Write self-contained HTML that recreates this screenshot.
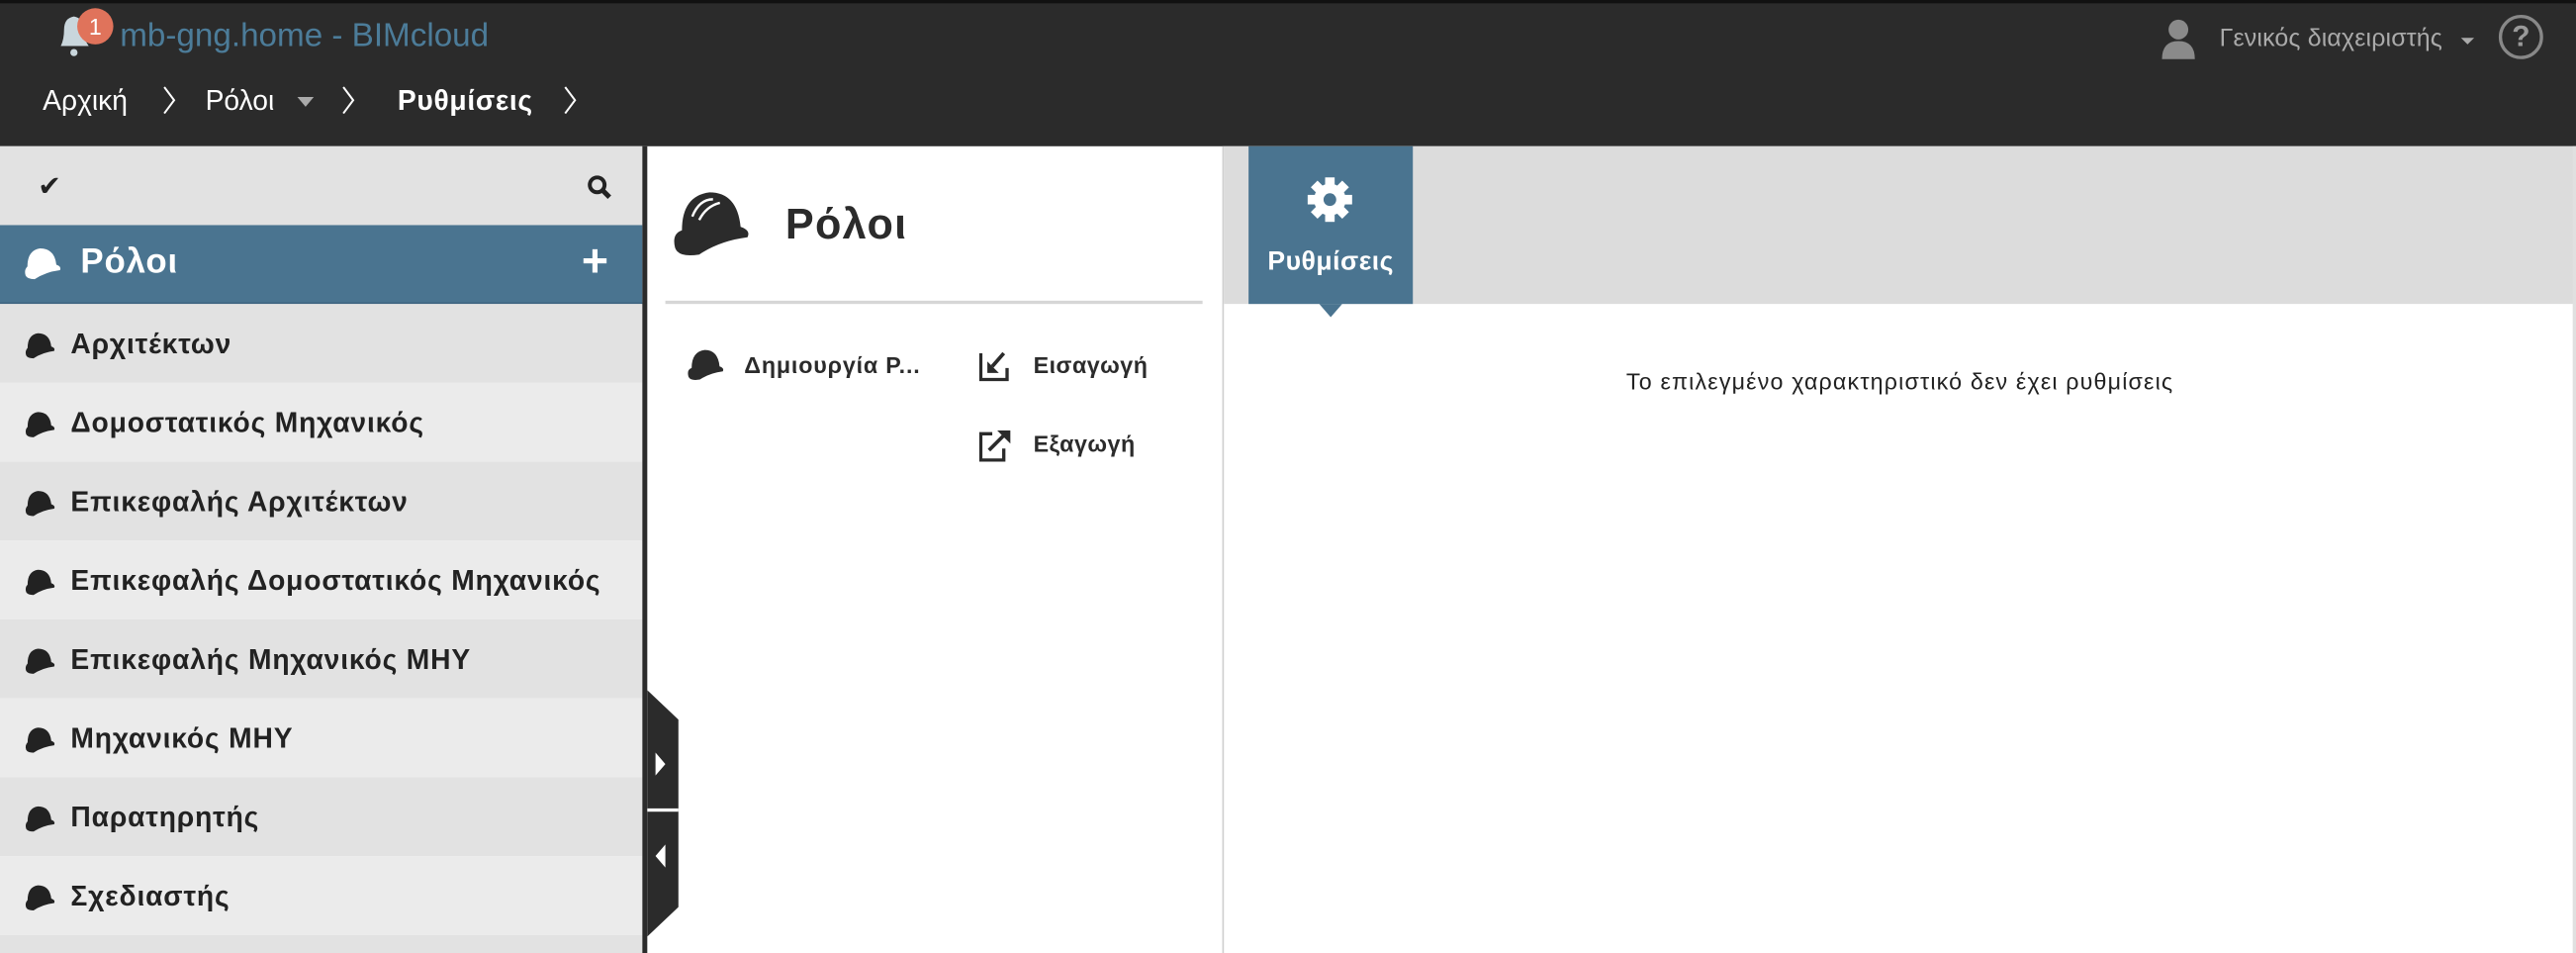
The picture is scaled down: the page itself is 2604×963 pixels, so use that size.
<!DOCTYPE html>
<html><head><meta charset="utf-8"><style>
html,body{margin:0;padding:0;width:2604px;height:963px;overflow:hidden;background:#fff}
#s{position:absolute;left:0;top:0;width:1568px;height:580px;transform:scale(1.66071,1.66035);transform-origin:0 0;font-family:"Liberation Sans","DejaVu Sans",sans-serif;}
.a{position:absolute}
.top{left:0;top:0;width:1568px;height:89px;background:#2b2b2b;border-top:2px solid #111;box-sizing:border-box}
.bc{color:#fff;font-size:17px;top:52px}
.chev{top:51px;width:8px;height:20px}
.row{left:0;width:391px;height:48px;font-weight:bold;font-size:17px;color:#222;line-height:50px;letter-spacing:.5px}
.row span{position:absolute;left:43px}
.row svg{position:absolute;left:13px;top:16px}
</style></head><body><div id="s">
<div class="a top"></div>
<svg class="a" style="left:33px;top:6px" width="26" height="30" viewBox="0 0 26 30"><path d="M4 22 Q6 18 6 12 Q6 5 12 4 Q18 5 18 12 Q18 18 21 22 Z" fill="#c9d6dc"/><circle cx="12" cy="26" r="2.2" fill="#c9d6dc"/></svg>
<div class="a" style="left:47px;top:5px;width:22px;height:22px;border-radius:50%;background:#e0735b;color:#fff;font-size:14px;text-align:center;line-height:22px">1</div>
<div class="a" style="left:73px;top:11px;color:#4c7c99;font-size:20px">mb-gng.home - BIMcloud</div>
<div class="a bc" style="left:26px">Αρχική</div>
<svg class="a chev" style="left:99px"><path d="M1 2 L7 10 L1 18" fill="none" stroke="#fff" stroke-width="1.2"/></svg>
<div class="a bc" style="left:125px">Ρόλοι</div>
<div class="a" style="left:181px;top:59px;width:0;height:0;border-left:5px solid transparent;border-right:5px solid transparent;border-top:6px solid #aaa"></div>
<svg class="a chev" style="left:208px"><path d="M1 2 L7 10 L1 18" fill="none" stroke="#fff" stroke-width="1.2"/></svg>
<div class="a bc" style="left:242px;font-weight:bold;letter-spacing:.4px">Ρυθμίσεις</div>
<svg class="a chev" style="left:343px"><path d="M1 2 L7 10 L1 18" fill="none" stroke="#fff" stroke-width="1.2"/></svg>
<svg class="a" style="left:1315px;top:11px" width="22" height="26" viewBox="0 0 22 26"><circle cx="11" cy="7" r="6" fill="#8a8a8a"/><path d="M1 25 Q1 14 11 14 Q21 14 21 25 Z" fill="#8a8a8a"/></svg>
<div class="a" style="left:1351px;top:15px;color:#aaa;font-size:15px;letter-spacing:.1px">Γενικός διαχειριστής</div>
<div class="a" style="left:1498px;top:23px;border-left:4px solid transparent;border-right:4px solid transparent;border-top:4px solid #aaa"></div>
<div class="a" style="left:1521px;top:9px;width:23px;height:23px;border:2px solid #888;border-radius:50%;color:#999;font-weight:bold;font-size:18px;text-align:center;line-height:23px">?</div>
<div class="a" style="left:0;top:89px;width:391px;height:48px;background:#e2e2e2"></div>
<div class="a" style="left:23px;top:104px;font-size:17px;color:#222">✔</div>
<svg class="a" style="left:357px;top:106px" width="16" height="16" viewBox="0 0 16 16"><circle cx="6.5" cy="6.5" r="4.5" fill="none" stroke="#222" stroke-width="2.4"/><path d="M10 10 L14 14" stroke="#222" stroke-width="3"/></svg>
<div class="a" style="left:0;top:137px;width:391px;height:48px;background:#4a7490;border-bottom:1px solid #3e6480;box-sizing:border-box"></div>
<svg class="a" style="left:12px;top:149px" width="27" height="22" viewBox="0 0 24 20"><path d="M3 17 Q2 14 4 12 Q4 3 11 2 Q19 2 20 11 Q23 12 22 14 Q14 15 8 19 Q4 19 3 17 Z" fill="#fff"/></svg>
<div class="a" style="left:49px;top:148px;color:#fff;font-weight:bold;font-size:21px;letter-spacing:.5px">Ρόλοι</div>
<div class="a" style="left:354px;top:143px;color:#fff;font-weight:bold;font-size:28px">+</div>
<div class="a row" style="top:185px;background:#e2e2e2"><svg width="22" height="18" viewBox="0 0 24 20"><path d="M3 17 Q2 14 4 12 Q4 3 11 2 Q19 2 20 11 Q23 12 22 14 Q14 15 8 19 Q4 19 3 17 Z" fill="#222"/></svg><span>Αρχιτέκτων</span></div>
<div class="a row" style="top:233px;background:#ebebeb"><svg width="22" height="18" viewBox="0 0 24 20"><path d="M3 17 Q2 14 4 12 Q4 3 11 2 Q19 2 20 11 Q23 12 22 14 Q14 15 8 19 Q4 19 3 17 Z" fill="#222"/></svg><span>Δομοστατικός Μηχανικός</span></div>
<div class="a row" style="top:281px;background:#e2e2e2"><svg width="22" height="18" viewBox="0 0 24 20"><path d="M3 17 Q2 14 4 12 Q4 3 11 2 Q19 2 20 11 Q23 12 22 14 Q14 15 8 19 Q4 19 3 17 Z" fill="#222"/></svg><span>Επικεφαλής Αρχιτέκτων</span></div>
<div class="a row" style="top:329px;background:#ebebeb"><svg width="22" height="18" viewBox="0 0 24 20"><path d="M3 17 Q2 14 4 12 Q4 3 11 2 Q19 2 20 11 Q23 12 22 14 Q14 15 8 19 Q4 19 3 17 Z" fill="#222"/></svg><span>Επικεφαλής Δομοστατικός Μηχανικός</span></div>
<div class="a row" style="top:377px;background:#e2e2e2"><svg width="22" height="18" viewBox="0 0 24 20"><path d="M3 17 Q2 14 4 12 Q4 3 11 2 Q19 2 20 11 Q23 12 22 14 Q14 15 8 19 Q4 19 3 17 Z" fill="#222"/></svg><span>Επικεφαλής Μηχανικός ΜΗΥ</span></div>
<div class="a row" style="top:425px;background:#ebebeb"><svg width="22" height="18" viewBox="0 0 24 20"><path d="M3 17 Q2 14 4 12 Q4 3 11 2 Q19 2 20 11 Q23 12 22 14 Q14 15 8 19 Q4 19 3 17 Z" fill="#222"/></svg><span>Μηχανικός ΜΗΥ</span></div>
<div class="a row" style="top:473px;background:#e2e2e2"><svg width="22" height="18" viewBox="0 0 24 20"><path d="M3 17 Q2 14 4 12 Q4 3 11 2 Q19 2 20 11 Q23 12 22 14 Q14 15 8 19 Q4 19 3 17 Z" fill="#222"/></svg><span>Παρατηρητής</span></div>
<div class="a row" style="top:521px;background:#ebebeb"><svg width="22" height="18" viewBox="0 0 24 20"><path d="M3 17 Q2 14 4 12 Q4 3 11 2 Q19 2 20 11 Q23 12 22 14 Q14 15 8 19 Q4 19 3 17 Z" fill="#222"/></svg><span>Σχεδιαστής</span></div>
<div class="a" style="left:0;top:569px;width:391px;height:11px;background:#e2e2e2"></div>
<div class="a" style="left:391px;top:89px;width:3px;height:491px;background:#2b2b2b"></div>
<svg class="a" style="left:394px;top:420px" width="19" height="150" viewBox="0 0 19 150"><path d="M0 0 L19 18 L19 132 L0 150 Z" fill="#2b2b2b"/><rect x="0" y="72" width="19" height="2" fill="#fff"/><path d="M5 38 L11 45 L5 52 Z" fill="#fff"/><path d="M11 94 L5 101 L11 108 Z" fill="#fff"/></svg>
<svg class="a" style="left:407px;top:115px" width="54" height="42" viewBox="0 0 24 20"><path d="M1 17 Q0 13 3 12 Q3 2 11 1 Q19 1 20 11 Q23 12 22 14 Q14 15 8 19 Q2 20 1 17 Z" fill="#2b2b2b"/><path d="M6 8 Q8 3 12 3 M8 9 Q10 5 14 4" stroke="#fff" stroke-width=".7" fill="none"/></svg>
<div class="a" style="left:478px;top:121px;font-weight:bold;font-size:26px;color:#2b2b2b;letter-spacing:.8px">Ρόλοι</div>
<div class="a" style="left:405px;top:183px;width:327px;height:2px;background:#d6d6d6"></div>
<svg class="a" style="left:418px;top:212px" width="24" height="20" viewBox="0 0 24 20"><path d="M1 17 Q0 13 3 12 Q3 2 11 1 Q19 1 20 11 Q23 12 22 14 Q14 15 8 19 Q2 20 1 17 Z" fill="#2b2b2b"/></svg>
<div class="a" style="left:453px;top:214px;font-weight:bold;font-size:14px;color:#2b2b2b;letter-spacing:.5px">Δημιουργία Ρ...</div>
<svg class="a" style="left:596px;top:213px" width="19" height="19" viewBox="0 0 19 19"><path d="M1 2 V18 H17 V11" fill="none" stroke="#2b2b2b" stroke-width="2"/><path d="M15 2 L8 10" stroke="#2b2b2b" stroke-width="2.2"/><path d="M5 7 V14 H12 Z" fill="#2b2b2b"/></svg>
<div class="a" style="left:629px;top:214px;font-weight:bold;font-size:14px;color:#2b2b2b;letter-spacing:.3px">Εισαγωγή</div>
<svg class="a" style="left:596px;top:261px" width="20" height="20" viewBox="0 0 20 20"><path d="M8 3 H1 V19 H15 V12" fill="none" stroke="#2b2b2b" stroke-width="2"/><path d="M6 13 L15 4" stroke="#2b2b2b" stroke-width="2.2"/><path d="M11 1 H19 V9 Z" fill="#2b2b2b"/></svg>
<div class="a" style="left:629px;top:262px;font-weight:bold;font-size:14px;color:#2b2b2b;letter-spacing:.3px">Εξαγωγή</div>
<div class="a" style="left:744px;top:89px;width:1px;height:491px;background:#d0d0d0"></div>
<div class="a" style="left:745px;top:89px;width:823px;height:96px;background:#dcdcdc"></div>
<div class="a" style="left:760px;top:89px;width:100px;height:96px;background:#4a7490"></div>
<div class="a" style="left:803px;top:185px;border-left:7px solid transparent;border-right:7px solid transparent;border-top:8px solid #4a7490"></div>
<svg class="a" style="left:795px;top:107px" width="29" height="29" viewBox="-15 -15 30 30"><g fill="#fff"><circle r="10"/><rect x="-3" y="-14" width="6" height="28"/><rect x="-3" y="-14" width="6" height="28" transform="rotate(45)"/><rect x="-3" y="-14" width="6" height="28" transform="rotate(90)"/><rect x="-3" y="-14" width="6" height="28" transform="rotate(135)"/></g><circle r="4" fill="#4a7490"/></svg>
<div class="a" style="left:760px;top:151px;width:100px;text-align:center;color:#fff;font-weight:bold;font-size:16px;letter-spacing:.3px">Ρυθμίσεις</div>
<div class="a" style="left:745px;top:224px;width:823px;text-align:center;font-size:14px;color:#222;letter-spacing:.7px">Το επιλεγμένο χαρακτηριστικό δεν έχει ρυθμίσεις</div>
<div class="a" style="left:1566px;top:89px;width:2px;height:491px;background:#e0e0e0"></div>
</div></body></html>
